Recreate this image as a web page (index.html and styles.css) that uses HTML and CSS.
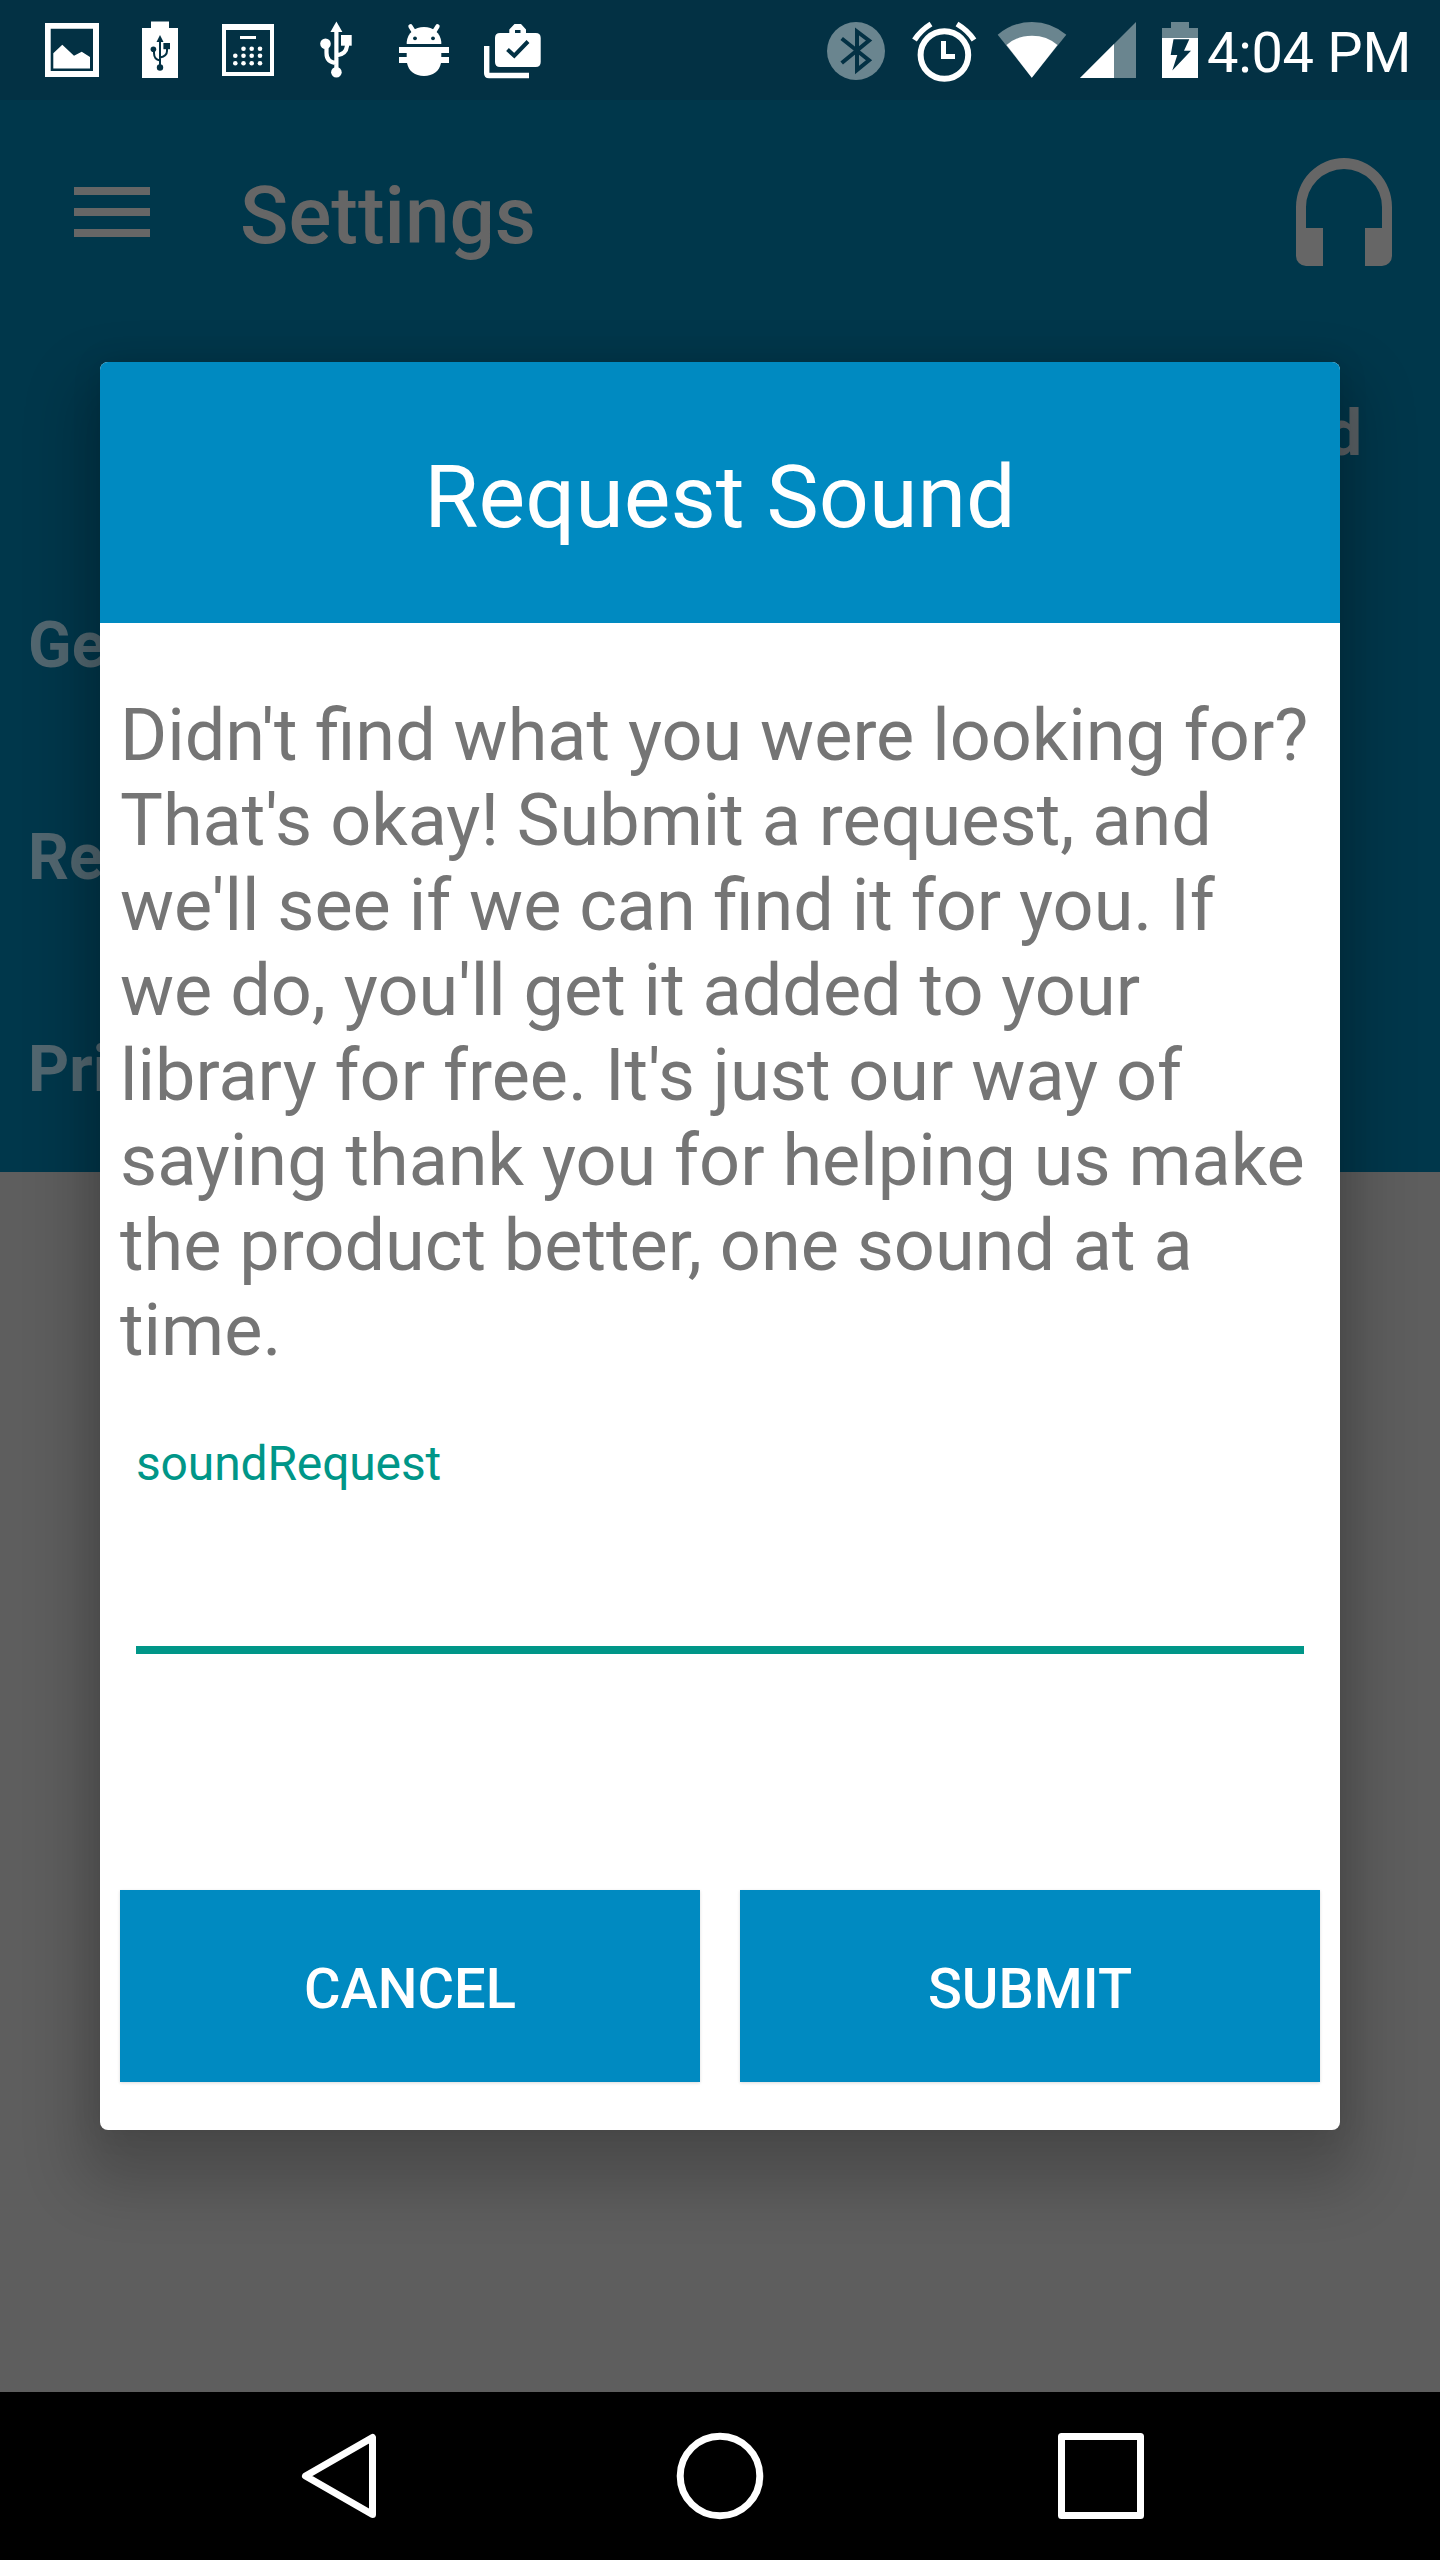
FILE: index.html
```html
<!DOCTYPE html>
<html lang="en">
<head>
    <meta charset="UTF-8">
    <meta name="viewport" content="width=device-width, initial-scale=1.0">
    <title>Request Sound</title>
    <link rel="stylesheet" href="styles.css">
</head>
<body>

    <div class="screen">
        <div class="status-bar">
            <div class="notifications">
                <!-- picture -->
                <svg width="88" height="98" viewBox="0 0 88 98">
                    <path fill="#fff" fill-rule="evenodd" d="M17 23H71V77H17zM22.7 28.7V71H65V28.7z"/>
                    <path fill="#fff" d="M25.3 53.3L34.3 44.7L46 55.7L53.7 51.7L62 57V68.5H25.3z"/>
                </svg>
                <!-- usb battery -->
                <svg width="88" height="98" viewBox="0 0 88 98">
                    <path fill="#fff" d="M35 21.5H53V28H62V78H26V28H35z"/>
                    <g fill="#033144">
                        <path d="M44 35L47.5 42H40.5z"/>
                        <circle cx="44" cy="67.5" r="3.2"/>
                        <circle cx="37.4" cy="49.3" r="2.8"/>
                        <path d="M47.4 43H54V49.2H47.4z"/>
                    </g>
                    <path fill="none" stroke="#033144" stroke-width="2" d="M44 40V66M38 50V53Q38 59.5 44 60.5M51 48V51Q51 56 44 57.5"/>
                </svg>
                <!-- dialer -->
                <svg width="88" height="98" viewBox="0 0 88 98">
                    <path fill="#fff" fill-rule="evenodd" d="M18 24H70V76H18zM22 30V72H66V30z"/>
                    <path fill="#fff" d="M36 36H52V39H36z"/>
                    <g fill="#fff">
                        <circle cx="39.5" cy="48.7" r="2.3"/><circle cx="47.7" cy="48.7" r="2.3"/><circle cx="56" cy="48.7" r="2.3"/>
                        <circle cx="31.3" cy="55.8" r="2.3"/><circle cx="39.5" cy="55.8" r="2.3"/><circle cx="47.7" cy="55.8" r="2.3"/><circle cx="56" cy="55.8" r="2.3"/>
                        <circle cx="31.3" cy="63.2" r="2.3"/><circle cx="39.5" cy="63.2" r="2.3"/><circle cx="47.7" cy="63.2" r="2.3"/><circle cx="56" cy="63.2" r="2.3"/>
                    </g>
                </svg>
                <!-- usb -->
                <svg width="88" height="98" viewBox="0 0 88 98">
                    <g fill="#fff">
                        <path d="M44.4 21.5L50.4 32H38.4z"/>
                        <circle cx="44.4" cy="72.2" r="5.3"/>
                        <circle cx="33.5" cy="43.7" r="5.3"/>
                        <path d="M49 35H59.7V45.7H49z"/>
                    </g>
                    <path fill="none" stroke="#fff" stroke-width="4.2" d="M44.4 30V70M34.5 46V53Q34.5 62.5 44.4 62.8M55 44V46Q54 54.5 44.4 55.5"/>
                </svg>
                <!-- android -->
                <svg width="88" height="98" viewBox="0 0 88 98">
                    <g fill="#fff">
                        <path d="M26.7 44V42C27.5 33 35 27 44 27S60.5 33 61.3 42V44z"/>
                        <path d="M19 47H69V53H61.3V57H69V63H61C59.5 71 53 76 44 76S28.5 71 27 63H19V57H26.7V53H19z"/>
                    </g>
                    <path fill="none" stroke="#fff" stroke-width="4.4" stroke-linecap="round" d="M30.5 26.3L34 32M57.5 26.3L54 32"/>
                    <circle cx="35" cy="38.3" r="1.9" fill="#033144"/>
                    <circle cx="53" cy="38.3" r="1.9" fill="#033144"/>
                </svg>
                <!-- work updates -->
                <svg width="88" height="98" viewBox="0 0 88 98">
                    <path fill="#fff" d="M16 46H21.4V72.8H61V78.3H21Q16 78.3 16 73.3z"/>
                    <path fill="#fff" fill-rule="evenodd" d="M41.3 33V29.5L46.5 24H53L58 29.5V33H67.7Q72.7 33 72.7 38V62Q72.7 67 67.7 67H32Q27 67 27 62V38Q27 33 32 33zM47 30V33H52.5V30z"/>
                    <path fill="none" stroke="#033144" stroke-width="4" d="M39.5 49.5L46.3 55.7L60 41.5"/>
                </svg>
            </div>
            <div class="system-icons">
                <!-- bluetooth -->
                <svg width="88" height="98" viewBox="812 0 88 98">
                    <circle cx="856" cy="51" r="29" fill="#6a858f"/>
                    <path fill="none" stroke="#033144" stroke-width="4" d="M841.7 38.5L869 60.3L857 70V31.5L869 40.5L841.7 63"/>
                </svg>
                <!-- alarm -->
                <svg width="88" height="98" viewBox="900 0 88 98">
                    <circle cx="944.4" cy="55" r="23.8" fill="none" stroke="#fff" stroke-width="6"/>
                    <path fill="#fff" d="M941 41H946V54H955V59H941z"/>
                    <path fill="none" stroke="#fff" stroke-width="5.5" d="M914.5 40Q920.5 30.5 931 24M974 40Q968 30.5 957 24"/>
                </svg>
                <!-- wifi -->
                <svg width="88" height="98" viewBox="988 0 88 98">
                    <path fill="#6a858f" d="M1031.8 77.7L997.7 34.7Q1013 22 1032 22T1066.3 34.7z"/>
                    <path fill="#fff" d="M1031.8 77.7L1006.5 45Q1017 35.7 1032 35.7T1057.5 45z"/>
                </svg>
                <!-- cell signal -->
                <svg width="72" height="98" viewBox="1076 0 72 98">
                    <path fill="#6a858f" d="M1080 78L1136 22V78z"/>
                    <path fill="#fff" d="M1080 78L1114 44V78z"/>
                </svg>
                <!-- battery charging -->
                <svg width="56" height="98" viewBox="1148 0 56 98">
                    <path fill="#6a858f" d="M1171 22H1189V28H1198V38H1162V28H1171z"/>
                    <path fill="#fff" d="M1162 38H1198V78H1162z"/>
                    <path fill="#033144" d="M1173.5 39.3H1189.3L1184 50.7H1191L1172.3 70.5L1177.3 55H1170.7z"/>
                </svg>
                <span class="clock">4:04 PM</span>
            </div>
        </div>

        <div class="panel">
            <div class="toolbar">
                <div class="menu-btn">
                    <span></span>
                    <span></span>
                    <span></span>
                </div>
                <h1>Settings</h1>
                <svg class="headphones" width="96" height="108" viewBox="0 0 96 108">
                    <path fill="#666" d="M0 49A48 49 0 0 1 96 49V98A10 10 0 0 1 86 108H69V70H86V49A38 38 0 0 0 10 49V70H27V108H10A10 10 0 0 1 0 98z"/>
                </svg>
            </div>
            <div class="tab">d</div>
            <div class="row">Ge</div>
            <div class="row">Re</div>
            <div class="row">Pri</div>
        </div>

        <div class="content"></div>

        <div class="nav-bar">
            <svg width="88" height="88" viewBox="0 0 88 88">
                <path fill="none" stroke="#fff" stroke-width="7" stroke-linejoin="round" d="M77.5 5.5V82.500L10.500 44z"/>
            </svg>
            <svg width="88" height="88" viewBox="0 0 88 88">
                <circle cx="44" cy="44" r="39.8" fill="none" stroke="#fff" stroke-width="7"/>
            </svg>
            <svg width="88" height="88" viewBox="0 0 88 88">
                <rect x="4.5" y="4.5" width="79" height="79" fill="none" stroke="#fff" stroke-width="7" stroke-linejoin="round"/>
            </svg>
        </div>

        <div class="dialog">
            <h2>Request Sound</h2>
            <p>Didn't find what you were looking for?<br>
            That's okay! Submit a request, and<br>
            we'll see if we can find it for you. If<br>
            we do, you'll get it added to your<br>
            library for free. It's just our way of<br>
            saying thank you for helping us make<br>
            the product better, one sound at a<br>
            time.</p>
            <div class="field">
                <label for="soundRequest">soundRequest</label>
                <input type="text" id="soundRequest">
            </div>
            <div class="buttons">
                <button>CANCEL</button>
                <button>SUBMIT</button>
            </div>
        </div>
    </div>

</body>
</html>
```

FILE: styles.css
```css
body {
    font-family: Roboto, 'Liberation Sans', sans-serif;
    margin: 0;
    padding: 0;
    background-color: #000;
}

svg {
    display: block;
    flex-shrink: 0;
}

.screen {
    position: relative;
    width: 1440px;
    height: 2560px;
    display: flex;
    flex-direction: column;
    overflow: hidden;
}

/* status bar */
.status-bar {
    height: 100px;
    display: flex;
    justify-content: space-between;
    background-color: #033144;
}

.notifications {
    display: flex;
    padding-left: 28px;
}

.system-icons {
    display: flex;
    width: 628px;
}

.clock {
    color: #fff;
    font-size: 56px;
    line-height: 106px;
    padding-left: 3px;
    letter-spacing: -0.3px;
    white-space: nowrap;
}

/* dimmed page behind the dialog */
.panel {
    height: 1072px;
    background-color: #00374b;
    overflow: hidden;
}

.toolbar {
    height: 224px;
    display: flex;
    align-items: center;
    padding: 0 48px 0 74px;
}

.menu-btn {
    display: flex;
    flex-direction: column;
    gap: 13px;
    width: 76px;
}

.menu-btn span {
    height: 8px;
    background-color: #666;
}

.toolbar h1 {
    flex: 1;
    margin: 0 0 0 90px;
    padding-top: 8px;
    color: #666;
    font-size: 80px;
    font-weight: 500;
}

.tab {
    height: 216px;
    padding-right: 78px;
    text-align: right;
    font-size: 64px;
    font-weight: 700;
    line-height: 219px;
    color: #5b6266;
}

.row {
    padding-left: 28px;
    font-size: 64px;
    font-weight: 700;
    line-height: 212px;
    color: #526770;
}

.content {
    flex: 1;
    background-color: #5e5e5e;
}

.nav-bar {
    height: 168px;
    display: flex;
    justify-content: center;
    align-items: center;
    gap: 293px;
    background-color: #000;
}

/* dialog */
.dialog {
    position: absolute;
    top: 362px;
    left: 100px;
    width: 1240px;
    height: 1768px;
    display: flex;
    flex-direction: column;
    background-color: #fff;
    border-radius: 8px;
    box-shadow: 0 36px 60px 20px rgba(0, 0, 0, 0.2), 0 0 30px rgba(0, 0, 0, 0.1);
}

.dialog h2 {
    margin: 0;
    height: 261px;
    line-height: 270px;
    text-align: center;
    color: #fff;
    background-color: #008ac1;
    border-radius: 8px 8px 0 0;
    font-size: 88px;
    font-weight: 400;
}

.dialog p {
    margin: 0;
    padding: 70px 20px 0;
    font-size: 72px;
    line-height: 85px;
    color: #757575;
    white-space: nowrap;
}

.field {
    display: flex;
    flex-direction: column;
    padding: 63px 36px 0;
}

.field label {
    font-size: 48px;
    line-height: 56px;
    letter-spacing: -0.15px;
    color: #009688;
}

.field input {
    height: 162px;
    box-sizing: border-box;
    padding: 0;
    border: none;
    border-bottom: 8px solid #009688;
    font-size: 72px;
}

.buttons {
    display: flex;
    gap: 40px;
    margin-top: auto;
    padding: 0 20px 48px;
}

.buttons button {
    flex: 1;
    height: 192px;
    padding: 6px 0 0;
    border: none;
    background-color: #008ac1;
    color: #fff;
    font-family: inherit;
    font-size: 56px;
    font-weight: 500;
    box-shadow: 0 1px 3px rgba(0, 0, 0, 0.15);
}
```
